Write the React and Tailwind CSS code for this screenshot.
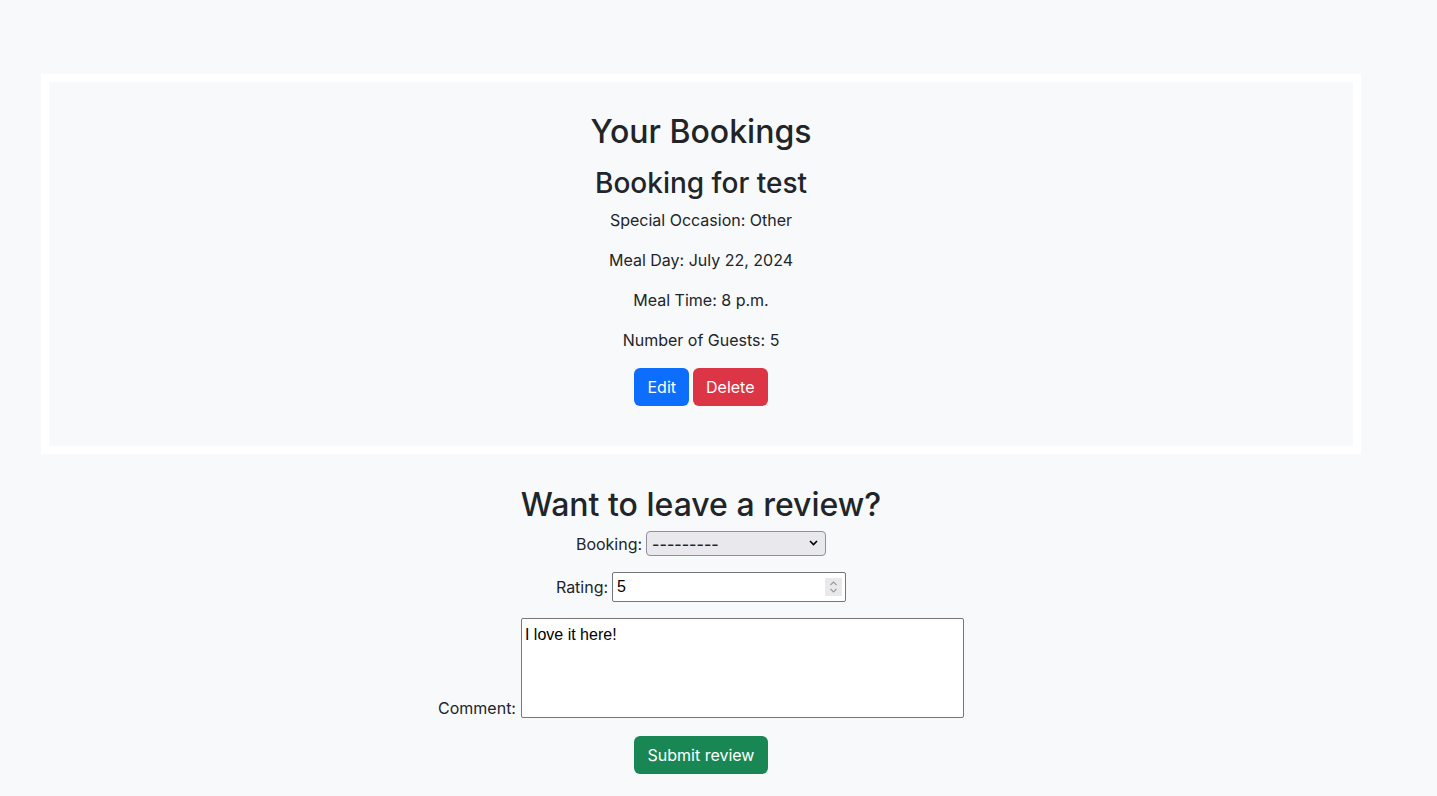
import React from 'react';

const Detail = ({ children }) => (
  <p className="h-6 leading-6 mb-4">{children}</p>
);

export default function App() {
  return (
    <div className="min-h-[796px] bg-[#f8f9fa] text-[#212529] text-base font-['Inter',sans-serif] pt-[74px]">
      <div className="w-[1320px] ml-[41px]">
        {/* bookings card */}
        <section className="border-8 border-white h-[380px] flex flex-col items-center text-center">
          <h2 className="mt-[31px] text-[32px] leading-[38px] font-medium">Your Bookings</h2>
          <h3 className="mt-[15px] mb-2 text-[28px] leading-[34px] font-medium">Booking for test</h3>
          <Detail>Special Occasion: Other</Detail>
          <Detail>Meal Day: July 22, 2024</Detail>
          <Detail>Meal Time: 8 p.m.</Detail>
          <Detail>Number of Guests: 5</Detail>
          <div className="flex gap-1">
            <button className="h-[38px] px-[13px] rounded-md bg-[#0d6efd] text-white leading-6">Edit</button>
            <button className="h-[38px] px-[13px] rounded-md bg-[#dc3545] text-white leading-6">Delete</button>
          </div>
        </section>

        {/* review form */}
        <section className="flex flex-col items-center">
          <h2 className="mt-[32px] text-[32px] leading-[38px] font-medium">Want to leave a review?</h2>

          <div className="mt-[7px] flex items-center gap-1">
            <label>Booking:</label>
            <div className="relative">
              <select className="appearance-none w-[180px] h-[25px] pl-[5px] rounded-[4px] border border-[#8f8f9d] bg-[#e9e9ed] text-[#212529] leading-5 font-medium">
                <option>---------</option>
              </select>
              <svg className="absolute right-[8px] top-[9px] pointer-events-none" width="9" height="6" viewBox="0 0 9 6">
                <path d="M1 1l3.5 3.5L8 1" fill="none" stroke="#000" strokeWidth="1.6" />
              </svg>
            </div>
          </div>

          <div className="mt-4 flex items-center gap-1">
            <label>Rating:</label>
            <div className="relative">
              <input
                type="text"
                defaultValue="5"
                className="w-[234px] h-[30px] pl-[4px] border border-[#767676] rounded-[2px] bg-white text-black font-['Liberation_Sans',sans-serif]"
              />
              <div className="absolute right-[4px] top-[6px] w-[17px] h-[18px] bg-[#e9e9ed] flex items-center justify-center">
                <svg width="9" height="14" viewBox="0 0 9 14">
                  <path d="M1.5 5l3-3 3 3M1.5 9l3 3 3-3" fill="none" stroke="#9a9a9a" strokeWidth="1.1" />
                </svg>
              </div>
            </div>
          </div>

          <div className="mt-4 flex items-end gap-[5px]">
            <label className="leading-6 -mb-[2px]">Comment:</label>
            <textarea
              defaultValue="I love it here!"
              className="w-[443px] h-[100px] px-[3px] pt-[5px] border border-[#767676] rounded-[2px] bg-white text-black resize-none leading-[22px] font-['Liberation_Sans',sans-serif]"
            />
          </div>

          <button className="mt-[18px] h-[38px] px-[14px] rounded-md bg-[#198754] text-white leading-6">Submit review</button>
        </section>
      </div>
    </div>
  );
}
